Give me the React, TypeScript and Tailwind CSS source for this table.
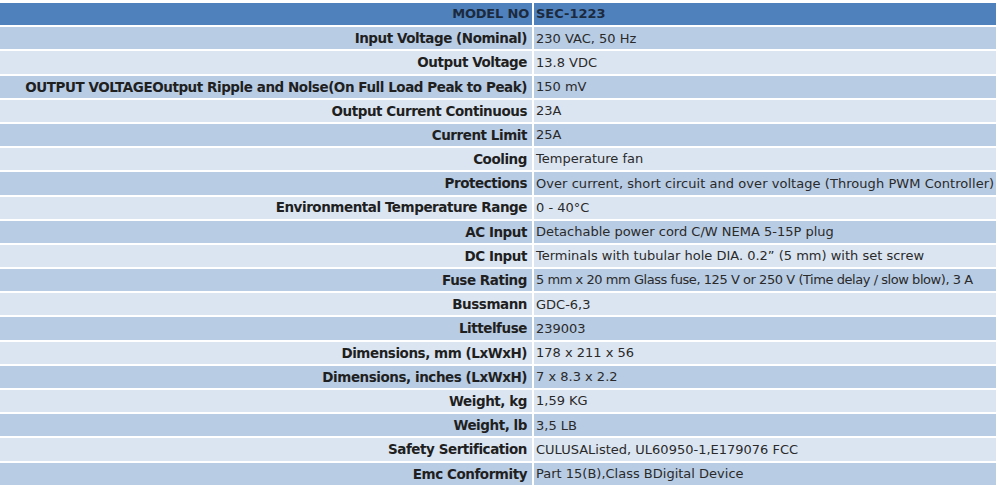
import React from "react";

const rows: [string, string, string?][] = [
  ["Input Voltage (Nominal)", "230 VAC, 50 Hz"],
  ["Output Voltage", "13.8 VDC"],
  ["OUTPUT VOLTAGEOutput Ripple and Nolse(On Full Load Peak to Peak)", "150 mV"],
  ["Output Current Continuous", "23A"],
  ["Current Limit", "25A"],
  ["Cooling", "Temperature fan"],
  ["Protections", "Over current, short circuit and over voltage (Through PWM Controller)", "tracking-[0.05px]"],
  ["Environmental Temperature Range", "0 - 40°C"],
  ["AC Input", "Detachable power cord C/W NEMA 5-15P plug"],
  ["DC Input", "Terminals with tubular hole DIA. 0.2\u201D (5 mm) with set screw"],
  ["Fuse Rating", "5 mm x 20 mm Glass fuse, 125 V or 250 V (Time delay / slow blow), 3 A", "tracking-[-0.45px]"],
  ["Bussmann", "GDC-6,3"],
  ["Littelfuse", "239003"],
  ["Dimensions, mm (LxWxH)", "178 x 211 x 56"],
  ["Dimensions, inches (LxWxH)", "7 x 8.3 x 2.2"],
  ["Weight, kg", "1,59 KG"],
  ["Weight, lb", "3,5 LB"],
  ["Safety Sertification", "CULUSAListed, UL60950-1,E179076 FCC"],
  ["Emc Conformity", "Part 15(B),Class BDigital Device"],
];

export default function App() {
  return (
    <div
      className="w-[1000px] h-[487px] bg-white pt-[3px] pr-[4px] overflow-hidden"
      style={{ fontFamily: '"DejaVu Sans", Verdana, sans-serif' }}
    >
      <div className="grid grid-cols-[532px_1fr] gap-x-[2px] gap-y-[2px]">
        <div className="h-[22.2px] bg-[#4f81bd] flex items-center justify-end pr-[3px] text-[13px] font-semibold text-[#1c2a3e] tracking-[-0.2px]">
          MODEL NO
        </div>
        <div className="h-[22.2px] bg-[#4f81bd] flex items-center pl-[2px] text-[13px] font-semibold text-[#1c2a3e]">
          SEC-1223
        </div>
        {rows.map(([k, v, t], i) => {
          const dark = i % 2 === 0;
          return (
            <React.Fragment key={k}>
              <div
                className={`h-[22.2px] flex items-center justify-end pr-[5px] text-[13.5px] font-semibold text-[#1f1f1f] tracking-[-0.45px] whitespace-nowrap ${
                  dark ? "bg-[#b8cce4]" : "bg-[#dbe5f1]"
                }`}
              >
                {k}
              </div>
              <div
                className={`h-[22.2px] flex items-center pl-[2px] text-[13px] text-[#2a2a2a] whitespace-nowrap overflow-hidden ${
                  dark ? "bg-[#b8cce4]" : "bg-[#dbe5f1]"
                } ${t ?? ""}`}
              >
                {v}
              </div>
            </React.Fragment>
          );
        })}
      </div>
    </div>
  );
}
